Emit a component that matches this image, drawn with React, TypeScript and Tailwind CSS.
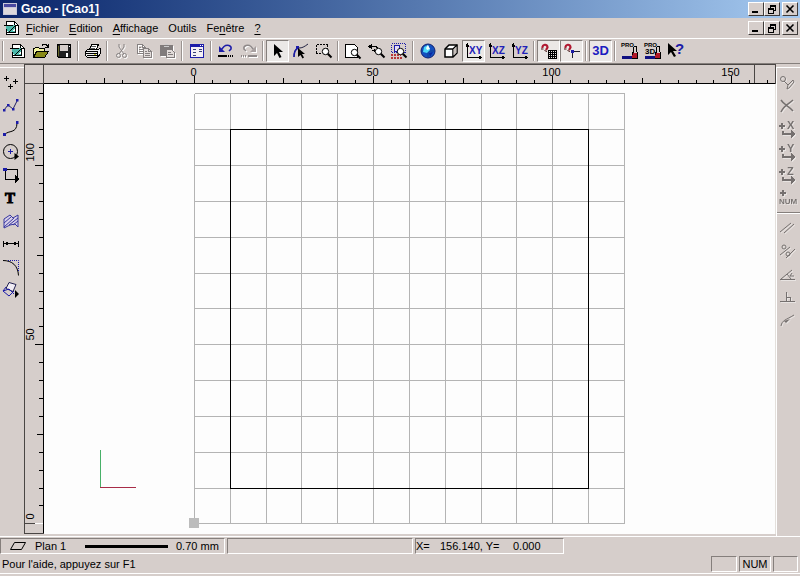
import React from 'react';
import clsx from 'clsx';

interface Tool {
  label: string;
  icon: React.ReactNode;
  pressed?: boolean;
  disabled?: boolean;
}

const BLUE = '#1c1ca8';
const SCALE = 3.583;
const toX = (unit: number) => Math.round(149.9 + unit * SCALE) + 0.5;
const toY = (unit: number) => Math.round(439.4 - unit * SCALE) + 0.5;
const range = (from: number, to: number, step: number) => {
  const values: number[] = [];
  for (let v = from; v <= to; v += step) values.push(v);
  return values;
};

function Icon({ children, smooth = false }: { children: React.ReactNode; smooth?: boolean }) {
  return (
    <svg
      viewBox="0 0 16 16"
      className="h-4 w-4 shrink-0 overflow-visible"
      fill="none"
      stroke="#000"
      shapeRendering={smooth ? 'auto' : 'crispEdges'}
      aria-hidden="true"
    >
      {children}
    </svg>
  );
}

function Label({ x, y, size, color = '#000', children }: { x: number; y: number; size: number; color?: string; children: string }) {
  return (
    <text x={x} y={y} fontSize={size} fontWeight="bold" fill={color} stroke="none" fontFamily="Liberation Sans, Arial, sans-serif">
      {children}
    </text>
  );
}

function DocIcon() {
  return (
    <Icon>
      <path d="M2.500 1.500h8l4 4v9h-12z" fill="#fff" />
      <path d="M10.500 1.500v4h4" />
      <path d="M1 5h10v7H4z" fill="#4cb8aa" stroke="none" />
      <path d="M0 5.500h9M3 12.500h9M11.500 5v8M5 12l6-6" />
      <path d="M8 11l3-3v3z" fill="#fff" stroke="none" />
    </Icon>
  );
}

function Lens({ x = 0, y = 0 }: { x?: number; y?: number }) {
  return (
    <g transform={`translate(${x} ${y})`} shapeRendering="auto">
      <circle cx="9.500" cy="8.500" r="3.200" fill="#fff" />
      <path d="M11.800 10.800l3.700 3.700" strokeWidth="2" />
    </g>
  );
}

function AxisIcon({ name }: { name: string }) {
  return (
    <Icon>
      <path d="M1.500 1v13.500H15" />
      <path d="M0 3.500h3M13.500 13v3" />
      <path d="M1.500 0l2 3h-4zM16 14.500l-3 2v-4z" fill="#000" stroke="none" />
      <Label x={3} y={11} size={10} color="#2020b8">{name}</Label>
    </Icon>
  );
}

function Magnet() {
  return (
    <g shapeRendering="auto">
      <path d="M1.500 5C1 1 6.500 0.500 6.500 4.500L5 7" stroke="#b01830" strokeWidth="2.200" />
      <path d="M0 6h2.500M3.500 7.500l2.500 1" stroke="#401010" />
    </g>
  );
}

function ProIcon({ three = false }: { three?: boolean }) {
  return (
    <Icon>
      <Label x={-1} y={4} size={6}>PRO</Label>
      {three && <Label x={0} y={11} size={8}>3D</Label>}
      <path d="M12 3.500h2.500V9M11.500 4v6" />
      <path d="M0 14h10" stroke="#101080" strokeWidth="3" />
      <path d="M10 10h6v5h-6z" fill="#b01828" stroke="none" />
      <path d="M10 15.500h6M15.500 9v6M10.500 9v3" />
    </Icon>
  );
}

function SnapArrow({ name }: { name: string }) {
  return (
    <Icon>
      <path d="M-1 5h6M2 2v6" strokeWidth="2" />
      <Label x={7} y={8} size={11}>{name}</Label>
      <path d="M3 10v3h9" strokeWidth="2" />
      <path d="M11 9l4 4-4 4z" fill="#000" stroke="none" />
    </Icon>
  );
}

const toolGroups: Tool[][] = [
  [
    { label: 'Nouveau', icon: <DocIcon /> },
    {
      label: 'Ouvrir',
      icon: (
        <Icon>
          <path d="M0.500 14V5.500h1l1-1h3l1 1h5V8" fill="#f4f4a0" />
          <path d="M0.500 14.500l3-6h12l-4 6z" fill="#8a8a18" />
          <path d="M9 2.500l1-1h3l2 2M15.500 1v3.500H12" />
        </Icon>
      ),
    },
    {
      label: 'Enregistrer',
      icon: (
        <Icon>
          <path d="M1.500 1.500h13v13h-12l-1-1z" fill="#202020" />
          <path d="M4 2h8v6H4z" fill="#d6cecb" stroke="none" />
          <path d="M10 10h2v4h-2z" fill="#fff" stroke="none" />
          <path d="M2.500 3v10" stroke="#68682c" />
          <path d="M13 3h1" stroke="#fff" />
        </Icon>
      ),
    },
  ],
  [
    {
      label: 'Imprimer',
      icon: (
        <Icon>
          <path d="M4.500 7l2-5.500h7L11 7z" fill="#fff" />
          <path d="M0.500 8.500l2-2h10l3-1v5l-3 4h-10l-2-2z" fill="#eee" />
          <path d="M0 8.500h12M1 10.500h12M2 12.500h10M2 14.500h10M12.500 8v6" />
          <path d="M6 3.500h5M5 5.500h5" stroke="#555" />
          <path d="M9 11.500h2" stroke="#c8c820" />
        </Icon>
      ),
    },
  ],
  [
    {
      label: 'Couper',
      disabled: true,
      icon: (
        <Icon smooth>
          <g stroke="#858080">
            <path d="M5 1v3l5 7M10 1v3l-5 7" />
            <circle cx="4.500" cy="12.500" r="2" />
            <circle cx="10.500" cy="12.500" r="2" />
          </g>
        </Icon>
      ),
    },
    {
      label: 'Copier',
      disabled: true,
      icon: (
        <Icon>
          <g stroke="#858080">
            <path d="M0.500 1.500h5l3 3v6h-8zM5.500 1.500v3h3M2 4.500h2M2 6.500h4M2 8.500h4" />
            <path d="M6.500 5.500h5l3 3v6h-8z" fill="#e2dcda" />
            <path d="M11.500 5.500v3h3M8 8.500h2M8 10.500h5M8 12.500h5" />
          </g>
        </Icon>
      ),
    },
    {
      label: 'Coller',
      disabled: true,
      icon: (
        <Icon>
          <g stroke="#807b7b">
            <path d="M0.500 2.500h12v10h-12z" fill="#807b7b" />
            <path d="M4 3.500h5M5 1.500h3" stroke="#ccc" />
            <path d="M6.500 6.500h5l3 3v5h-8z" fill="#e2dcda" />
            <path d="M8 9.500h3M8 11.500h5" />
          </g>
        </Icon>
      ),
    },
  ],
  [
    {
      label: 'Propriétés',
      icon: (
        <Icon>
          <path d="M1.500 1.500h13v13h-13z" fill="#f4f0f4" stroke={BLUE} />
          <path d="M2 3h12" stroke={BLUE} strokeWidth="2" />
          <path d="M11 2.500h1M13 2.500h1" stroke="#fff" />
          <path d="M4 6.500h3M4 9.500h3M4 12.500h3M10 6.500h3M10 8.500h3" stroke="#384078" />
        </Icon>
      ),
    },
  ],
  [
    {
      label: 'Annuler',
      icon: (
        <Icon smooth>
          <path d="M3 7l3-3.500c3-2.500 8-1 7 2.500l-2 2" stroke={BLUE} strokeWidth="1.500" />
          <path d="M1 3v6h6z" fill={BLUE} stroke="none" />
          <path d="M0 13h9" strokeWidth="2" />
          <path d="M10 13h6" strokeWidth="2" strokeDasharray="1 1" />
        </Icon>
      ),
    },
    {
      label: 'Rétablir',
      disabled: true,
      icon: (
        <Icon smooth>
          <g stroke="#8e8888">
            <path d="M13 7l-3-3.500c-3-2.500-8-1-7 2.500l2 2" strokeWidth="1.500" />
            <path d="M15 3v6H9z" fill="#a8a0a0" stroke="none" />
            <path d="M7 13h9" strokeWidth="2" />
            <path d="M0 13h6" strokeWidth="2" strokeDasharray="1 1" />
          </g>
        </Icon>
      ),
    },
  ],
  [
    {
      label: 'Sélection',
      pressed: true,
      icon: (
        <Icon smooth>
          <path d="M4 1v12l3-3 2.500 5 2-1L9 9h4z" fill="#000" stroke="none" />
        </Icon>
      ),
    },
    {
      label: 'Modifier les points',
      icon: (
        <Icon smooth>
          <path d="M1 14C1 8 3 5 6 5s5-1 9-4" stroke="#202040" />
          <path d="M1 14C1 9 3 6 5 5" stroke={BLUE} strokeWidth="1.500" />
          <path d="M3 3h3v3H3z" fill={BLUE} stroke="none" />
          <path d="M5 5v9l2.500-2 2 3.500 1.500-1-2-3.500h3z" fill="#000" stroke="none" />
        </Icon>
      ),
    },
    {
      label: 'Zoom fenêtre',
      icon: (
        <Icon>
          <path d="M0.500 1.500h11M0.500 1.500v9M0 10.500h6M11.500 2v4" strokeDasharray="2 1" />
          <Lens />
        </Icon>
      ),
    },
  ],
  [
    {
      label: 'Zoom page',
      icon: (
        <Icon>
          <path d="M0.500 1.500h9l3 3v10h-12z" fill="#fff" />
          <Lens y={1} />
        </Icon>
      ),
    },
    {
      label: 'Zoom précédent',
      icon: (
        <Icon>
          <path d="M1 3.500h6c3 0 3 4 0 4H5" />
          <path d="M0 3.500l4-3v6zM4 7.500l3-2v4z" fill="#000" stroke="none" />
          <Lens x={1} />
        </Icon>
      ),
    },
    {
      label: 'Zoom sélection',
      icon: (
        <Icon>
          <path d="M0.500 0.500h14v9H.500z" stroke={BLUE} strokeDasharray="1 1" />
          <path d="M3.500 2.500h5v6h-5z" fill="#e4dcf8" stroke={BLUE} />
          <path d="M0 11.500h10M0 14.500h12" stroke="#b83838" strokeWidth="2" strokeDasharray="2 1" />
          <Lens />
        </Icon>
      ),
    },
  ],
  [
    {
      label: 'Vue globale',
      icon: (
        <Icon smooth>
          <circle cx="8" cy="8" r="7" fill="#1450c0" stroke="#102070" />
          <path d="M8 1.500v13M1.500 8h13" stroke="#104090" />
          <path d="M4 4l4-2 2 5-3 3-4-1z" fill="#4cd8f8" stroke="none" />
          <path d="M6 5l2-3 2 4-3 1z" fill="#f0ffff" stroke="none" />
          <path d="M9 10l4-1-3 5z" fill="#0828a0" stroke="none" />
        </Icon>
      ),
    },
    {
      label: 'Vue 3D',
      icon: (
        <Icon smooth>
          <path d="M2 6l4-4h8v8l-4 4H2z" fill="#fff" strokeWidth="1.500" />
          <path d="M2 6h8v8M10 6l4-4" strokeWidth="1.500" />
          <path d="M10.500 6.500L13.500 3.500v6l-3 3z" fill="#c8c0bc" stroke="none" />
        </Icon>
      ),
    },
    { label: 'Plan XY', pressed: true, icon: <AxisIcon name="XY" /> },
    { label: 'Plan XZ', icon: <AxisIcon name="XZ" /> },
    { label: 'Plan YZ', icon: <AxisIcon name="YZ" /> },
  ],
  [
    {
      label: 'Accrochage grille',
      pressed: true,
      icon: (
        <Icon>
          <Magnet />
          <path d="M7.500 7v9M9.500 7v9M11.500 7v9M13.500 7v9M15.500 7v9M7 7.500h9M7 9.500h9M7 11.500h9M7 13.500h9M7 15.500h9" />
        </Icon>
      ),
    },
    {
      label: 'Accrochage points',
      pressed: true,
      icon: (
        <Icon>
          <Magnet />
          <path d="M8.500 15V8.500H16" stroke="#202030" />
          <path d="M7 7h3v3H7z" fill={BLUE} stroke="none" />
        </Icon>
      ),
    },
  ],
  [
    {
      label: 'Mode 3D',
      pressed: true,
      icon: <span className="text-[13px] leading-4 font-bold text-[#1c1cc0]">3D</span>,
    },
  ],
  [
    { label: 'Profil', icon: <ProIcon /> },
    { label: 'Profil 3D', icon: <ProIcon three /> },
    {
      label: 'Aide contextuelle',
      icon: (
        <Icon smooth>
          <path d="M0 0v12l3-3 3 5 2-1-3-5h4z" fill="#000" stroke="none" />
          <Label x={7} y={11} size={15} color={BLUE}>?</Label>
        </Icon>
      ),
    },
  ],
];

const drawTools: Tool[] = [
  {
    label: 'Points',
    icon: (
      <Icon>
        <path d="M1 3.500h5M3.500 1v5M10 6.500h5M12.500 4v5M5 11.500h5M7.500 9v5" />
      </Icon>
    ),
  },
  {
    label: 'Polyligne',
    icon: (
      <Icon smooth>
        <path d="M1 12l4-5 5 4 4-8" stroke="#202060" />
        <path d="M0 11h2.500v2.500H0zM4 6h2.500v2.500H4zM9 10h2.500v2.500H9zM13 1h2.500v2.500H13z" fill={BLUE} stroke="none" />
      </Icon>
    ),
  },
  {
    label: 'Courbe',
    icon: (
      <Icon smooth>
        <path d="M2 13.500C5 9 14 13 14 2" />
        <path d="M0 12h3v3H0zM13 0h2.500v3H13z" fill={BLUE} stroke="none" />
      </Icon>
    ),
  },
  {
    label: 'Cercle',
    icon: (
      <Icon smooth>
        <circle cx="7.500" cy="7.500" r="7" />
        <path d="M5 7.500h5M7.500 5v5" stroke={BLUE} />
        <path d="M11.500 9v7l4.500-3.500z" fill="#000" stroke="none" />
      </Icon>
    ),
  },
  {
    label: 'Rectangle',
    icon: (
      <Icon>
        <path d="M2.500 2.500h12v10h-12z" />
        <path d="M0 1h4v3H0z" fill={BLUE} stroke="none" />
        <path d="M12 8v8l4-4z" fill="#000" stroke="none" />
      </Icon>
    ),
  },
  {
    label: 'Texte',
    icon: (
      <Icon smooth>
        <text x="2" y="13" fontSize="15" fontWeight="bold" fill="#000" strokeWidth="1" fontFamily="Liberation Serif, Times New Roman, serif">
          T
        </text>
      </Icon>
    ),
  },
  {
    label: 'Hachures',
    icon: (
      <Icon smooth>
        <path d="M1 6l6-4 3 3 5-3v12l-3-3-5 1-6 3z" stroke="#3838a0" fill="#d8d0e8" />
        <path d="M1 10l7-6M1 14L11 5M6 12l9-7M10 12l5-4" stroke="#3838a0" />
      </Icon>
    ),
  },
  {
    label: 'Cotation',
    icon: (
      <Icon>
        <path d="M0.500 5v6M15.500 5v6M1 7.500h14" />
        <path d="M1 7.500l4-2v4zM15 7.500l-4-2v4z" fill="#000" stroke="none" />
      </Icon>
    ),
  },
  {
    label: 'Congé',
    icon: (
      <Icon smooth>
        <path d="M0 1.500c9 0 15 5 15.500 15" />
        <path d="M5 1.500h10.500V12" stroke={BLUE} strokeDasharray="1 1" />
      </Icon>
    ),
  },
  {
    label: 'Transformation',
    icon: (
      <Icon smooth>
        <path d="M6 0.500l7 2-3 7-7-3z" stroke="#202050" fill="#f0ecf4" />
        <path d="M3 5l-3 4 6 5 5-5" stroke={BLUE} />
        <path d="M0 9l6-2 5 5" stroke={BLUE} />
        <path d="M12 8v8l4-4z" fill="#000" stroke="none" />
      </Icon>
    ),
  },
];

const snapTools: Tool[] = [
  {
    label: 'Accrochage extrémité',
    icon: (
      <Icon smooth>
        <circle cx="3" cy="4" r="2.500" />
        <path d="M4 6l4 4M7 14l1-4 5-5 1 2-5 6z" />
      </Icon>
    ),
  },
  {
    label: 'Accrochage intersection',
    icon: (
      <Icon smooth>
        <path d="M1 2c3 5 8 6 12 11M1 14C4 7 9 6 13 2" strokeWidth="1.500" />
      </Icon>
    ),
  },
  { label: 'Décalage X', icon: <SnapArrow name="X" /> },
  { label: 'Décalage Y', icon: <SnapArrow name="Y" /> },
  { label: 'Décalage Z', icon: <SnapArrow name="Z" /> },
  {
    label: 'Saisie numérique',
    icon: (
      <Icon>
        <path d="M0 3h6M3 0v6" strokeWidth="2" />
        <Label x={-1} y={14} size={8}>NUM</Label>
      </Icon>
    ),
  },
];

const constraintTools: Tool[] = [
  { label: 'Parallèle', icon: <Icon smooth><path d="M0 12L11 3M4 13L14 4" /></Icon> },
  {
    label: 'Tangente',
    icon: (
      <Icon smooth>
        <path d="M0 12L10 4M6 15l9-9" />
        <circle cx="4" cy="4" r="2" />
        <circle cx="8" cy="11" r="2" />
      </Icon>
    ),
  },
  { label: 'Angle', icon: <Icon smooth><path d="M0 13.500h15M1 13L12 4M7 8l4 5M12 7l-2 3h4" /></Icon> },
  { label: 'Perpendiculaire', icon: <Icon><path d="M0 12.500h15M6.500 3v9M7 8.500h3.500V12" /></Icon> },
  {
    label: 'Courbe tangente',
    icon: (
      <Icon smooth>
        <path d="M1 14C2 8 6 8 14 3" />
        <path d="M4 9l6-2-4 4z" fill="#000" stroke="none" />
      </Icon>
    ),
  },
];

function ToolButton({ tool }: { tool: Tool }) {
  return (
    <button
      type="button"
      aria-label={tool.label}
      aria-pressed={tool.pressed}
      disabled={tool.disabled}
      className={clsx(
        'flex h-[22px] w-[23px] shrink-0 items-center justify-center border',
        tool.pressed
          ? 'border-t-[#857f7c] border-l-[#857f7c] border-r-white border-b-white bg-[#ebe8e6]'
          : 'border-transparent',
        tool.disabled && 'drop-shadow-[1px_1px_0_#fff]',
      )}
    >
      {tool.icon}
    </button>
  );
}

function SideTools({ tools, muted = false }: { tools: Tool[]; muted?: boolean }) {
  return (
    <div className={clsx('flex flex-col items-start', muted && 'opacity-45 drop-shadow-[1px_1px_0_#fff]')}>
      {tools.map((tool) => (
        <button key={tool.label} type="button" aria-label={tool.label} disabled={muted} className="flex h-[23px] w-[22px] items-center justify-center">
          {tool.icon}
        </button>
      ))}
    </div>
  );
}

function WindowButtons({ target }: { target: string }) {
  const base =
    'flex h-[14px] w-4 items-center justify-center border border-t-white border-l-white border-r-[#403c3a] border-b-[#403c3a] bg-[#d6cecb]';
  return (
    <div className="flex pr-[2px]">
      <button type="button" aria-label={`Réduire ${target}`} className={base}>
        <svg width="10" height="10" stroke="#000" strokeWidth="2" shapeRendering="crispEdges"><path d="M1 8h6" /></svg>
      </button>
      <button type="button" aria-label={`Restaurer ${target}`} className={base}>
        <svg width="10" height="10" fill="none" stroke="#000" shapeRendering="crispEdges">
          <path d="M3 1h6M3.500 1v3M8.500 1v5.500H7M3 2.500h6M1 4.500h6M1 5.500h6M1.500 4v5.500h5V4" />
        </svg>
      </button>
      <button type="button" aria-label={`Fermer ${target}`} className={clsx(base, 'ml-[2px]')}>
        <svg width="10" height="10" stroke="#000" strokeWidth="1.600"><path d="M1.500 1.500l7 7M8.500 1.500l-7 7" /></svg>
      </button>
    </div>
  );
}

function TitleBar() {
  return (
    <header className="flex h-[18px] items-center bg-linear-to-r from-[#0a246a] to-[#a6caf0] pl-[3px]">
      <svg width="14" height="12" shapeRendering="crispEdges" aria-hidden="true">
        <path d="M0 0h14v12H0z" fill="#c8c8d8" />
        <path d="M1 1h12v3H1z" fill="#4848a0" />
        <path d="M1 5h12v6H1z" fill="#dcd8dc" />
      </svg>
      <h1 className="flex-1 pl-1 text-[12px] leading-4 font-bold text-white">Gcao - [Cao1]</h1>
      <WindowButtons target="Gcao" />
    </header>
  );
}

const menus = [
  { key: 'F', rest: 'ichier' },
  { key: 'E', rest: 'dition' },
  { key: 'A', rest: 'ffichage' },
  { key: '', rest: 'Outils' },
  { before: 'Fe', key: 'n', rest: 'être' },
  { key: '?', rest: '' },
];

function MenuBar() {
  return (
    <div className="flex h-5 items-center pl-1">
      <DocIcon />
      <nav className="flex flex-1 gap-[10px] pl-[6px]">
        {menus.map((menu) => (
          <button key={menu.key + menu.rest} type="button" className="leading-4">
            {menu.before}
            {menu.key && <u className="underline-offset-2">{menu.key}</u>}
            {menu.rest}
          </button>
        ))}
      </nav>
      <WindowButtons target="Cao1" />
    </div>
  );
}

function ToolBar() {
  return (
    <div role="toolbar" aria-label="Outils" className="flex h-[26px] items-center border-t border-white border-b border-b-[#857f7c] pl-[2px]">
      {toolGroups.map((group, index) => (
        <div key={group[0].label} className="flex items-center">
          <span className={clsx('h-5 w-[2px] border-l border-[#9a9390] border-r border-r-white', index === 0 ? 'mr-[2px]' : 'mx-[2px]')} />
          {group.map((tool) => (
            <ToolButton key={tool.label} tool={tool} />
          ))}
        </div>
      ))}
    </div>
  );
}

function HorizontalRuler() {
  return (
    <svg className="h-5 w-full border-t border-r border-[#4a4644]" shapeRendering="crispEdges" fontSize="11">
      {range(-35, 170, 5).map((unit) => (
        <line key={unit} x1={toX(unit)} x2={toX(unit)} y1={unit % 50 === 0 ? 11 : unit % 25 === 0 ? 13 : 15} y2="19" stroke="#000" />
      ))}
      <line x1="710.500" x2="710.500" y1="0" y2="19" stroke="#4a4644" />
      <line x1="0" x2="100%" y1="18.500" y2="18.500" stroke="#000" />
      {[0, 50, 100, 150].map((unit) => (
        <text key={unit} x={toX(unit) - 1} y="11" textAnchor="middle">
          {unit}
        </text>
      ))}
    </svg>
  );
}

function VerticalRuler() {
  return (
    <div className="relative border-b border-l border-[#4a4644]">
      <svg className="absolute inset-0 h-full w-full" shapeRendering="crispEdges" fontSize="11">
        {range(5, 120, 5).map((unit) => (
          <line key={unit} x1={unit % 50 === 0 ? 10 : unit % 25 === 0 ? 12 : 14} x2="19" y1={toY(unit)} y2={toY(unit)} stroke="#000" />
        ))}
        <line x1="0" x2="10" y1={toY(0)} y2={toY(0)} stroke="#4a4644" />
        <line x1="10" x2="18" y1={toY(0)} y2={toY(0)} stroke="#fff" />
        <line x1="18.500" x2="18.500" y1="0" y2="100%" stroke="#000" />
        {[0, 50, 100].map((unit) => (
          <text key={unit} transform={`translate(9 ${toY(unit) - 4}) rotate(-90)`}>
            {unit}
          </text>
        ))}
      </svg>
    </div>
  );
}

function Drawing() {
  const lines = range(0, 120, 10);
  return (
    <div className="relative border-r border-[#e4e0dc] bg-[#fdfdfd]">
      <svg className="absolute inset-0 h-full w-full" fill="none" shapeRendering="crispEdges">
        <g stroke="#b4b4b4">
          {lines.map((unit) => (
            <line key={`v${unit}`} x1={toX(unit)} x2={toX(unit)} y1={toY(120)} y2={toY(0)} />
          ))}
          {lines.map((unit) => (
            <line key={`h${unit}`} x1={toX(0)} x2={toX(120)} y1={toY(unit)} y2={toY(unit)} />
          ))}
        </g>
        <rect x={toX(10)} y={toY(110)} width={toX(110) - toX(10)} height={toY(10) - toY(110)} stroke="#000" />
        <rect x={toX(0) - 5.5} y={toY(0) - 5.5} width="10" height="10" fill="#bcbcbc" />
        <path d="M56.500 366v37" stroke="#48b068" />
        <path d="M56 403.500h36" stroke="#a82c48" />
      </svg>
    </div>
  );
}

const pane = 'border border-t-[#857f7c] border-l-[#857f7c] border-r-white border-b-white';

function StatusBars() {
  return (
    <footer>
      <div className="flex h-[19px] items-center gap-[2px] border-t border-white">
        <div className={clsx(pane, 'flex h-4 w-[225px] items-center pl-[9px]')}>
          <svg width="16" height="8" fill="none" stroke="#000" aria-hidden="true">
            <path d="M4.500 0.500h11l-4 7H.500z" />
          </svg>
          <span className="w-[59px] pl-[9px]">Plan 1</span>
          <span className="h-[3px] w-[83px] bg-black" />
          <span className="pl-2">0.70 mm</span>
        </div>
        <div className={clsx(pane, 'h-4 w-[186px]')} />
        <div className={clsx(pane, 'flex h-4 w-[149px] items-center')}>
          <span className="w-6">X=</span>
          <span className="w-[73px]">156.140, Y=</span>
          <span>0.000</span>
        </div>
      </div>
      <div className="mb-[2px] flex h-[19px] items-center gap-[2px] border-b border-white pr-[2px] pl-[2px]">
        <p className="flex-1">Pour l'aide, appuyez sur F1</p>
        <span className={clsx(pane, 'h-4 w-[26px]')} />
        <span className={clsx(pane, 'flex h-4 w-8 items-center justify-center')}>NUM</span>
        <span className={clsx(pane, 'h-4 w-[25px]')} />
      </div>
    </footer>
  );
}

export default function App() {
  return (
    <div className="flex min-h-screen flex-col bg-[#d6cecb] font-['Liberation_Sans',Arial,sans-serif] text-[11px] leading-[14px] text-black">
      <TitleBar />
      <MenuBar />
      <ToolBar />
      <main className="flex flex-1">
        <aside aria-label="Dessin" className="mt-[3px] w-6 border-t border-white pt-[3px]">
          <SideTools tools={drawTools} />
        </aside>
        <section className="grid flex-1 grid-cols-[20px_1fr] grid-rows-[20px_1fr] pb-[2px]">
          <div className="border border-[#4a4644]" />
          <HorizontalRuler />
          <VerticalRuler />
          <Drawing />
        </section>
        <aside aria-label="Accrochage" className="mt-[3px] w-6 border-t border-l border-white pt-[3px]">
          <SideTools tools={snapTools} muted />
          <div className="mt-[3px] mb-[2px] h-[2px] border-t border-[#857f7c] border-b border-b-white" />
          <SideTools tools={constraintTools} muted />
        </aside>
      </main>
      <StatusBars />
    </div>
  );
}
